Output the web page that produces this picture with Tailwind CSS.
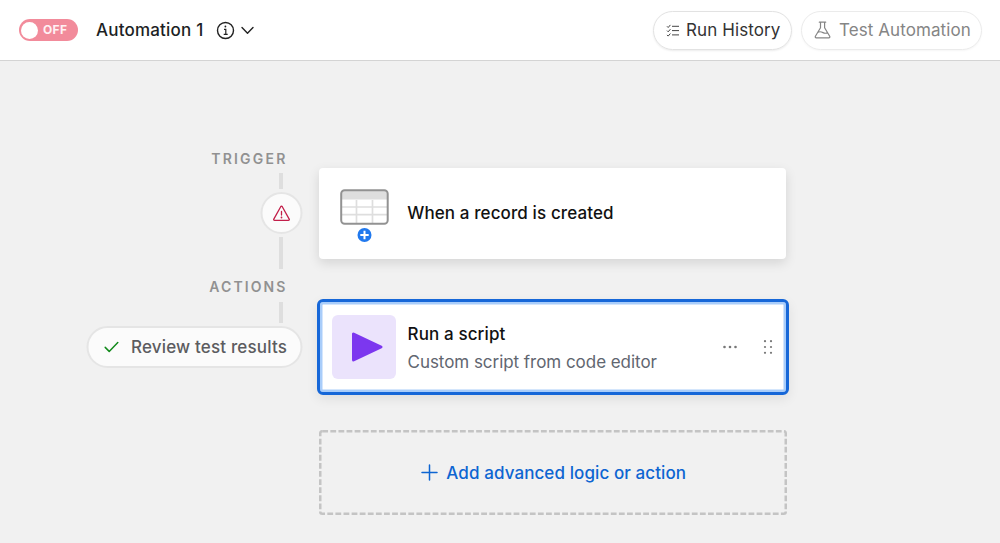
<!DOCTYPE html>
<html lang="en">
<head>
<meta charset="utf-8">
<title>Automation 1</title>
<script src="https://cdn.jsdelivr.net/npm/@tailwindcss/browser@4"></script>
</head>
<body class="h-[543px] w-[1000px] overflow-hidden bg-[#f1f1f1] font-['Inter','Liberation_Sans',sans-serif] text-[17px]">
<header class="flex h-[61px] items-center border-b border-[#d4d4d4] bg-white pl-[18.500px] pr-[18px]">
  <button class="flex h-[22px] w-[59px] items-center gap-[5px] rounded-full bg-[#f28b9b] pl-[2.500px]">
    <span class="size-[17px] rounded-full bg-white"></span>
    <span class="text-[12px] font-bold tracking-[0.3px] text-[#fff2f4]">OFF</span>
  </button>
  <h1 class="ml-[18.500px] w-[109px] whitespace-nowrap pt-[2px] font-medium tracking-[0.2px] text-[#1d1f25]">Automation 1</h1>
  <svg class="ml-[11px] size-[19px]" viewBox="0 0 19 19" fill="none" stroke="#222" stroke-width="1.4"><circle cx="9.5" cy="9.5" r="8"/><path d="M8 8.3h1.8v4.9M7.7 13.3h4" stroke-width="1.2"/><circle cx="9.4" cy="5.5" r=".9" fill="#222" stroke="none"/></svg>
  <svg class="ml-[6px] h-[9px] w-[13px]" viewBox="0 0 13 9" fill="none" stroke="#222" stroke-width="1.4" stroke-linecap="round" stroke-linejoin="round"><path d="M1 1.5l5.5 5.7L12 1.5"/></svg>
  <button class="ml-auto flex h-[39px] w-[139px] items-center rounded-full border border-[#e2e2e2] pl-[12px] text-[#333] shadow-[0_1px_2px_rgba(0,0,0,0.08)]">
    <svg class="h-[13px] w-[14px]" viewBox="0 0 14 13" fill="none" stroke="#444" stroke-width="1"><path d="M6 2.3h7M6 6.6h7M6 10.9h7M1 2.3l1.2 1.2L4.4.9M1 6.6l1.2 1.2 2.2-2.6M1 10.9l1.2 1.2 2.2-2.6"/></svg>
    <span class="ml-[6px] whitespace-nowrap pt-[2px] tracking-[0.1px]">Run History</span>
  </button>
  <button class="ml-[9px] flex h-[39px] w-[181px] items-center rounded-full border border-[#ebebeb] pl-[12px] text-[#858585] shadow-[0_1px_2px_rgba(0,0,0,0.04)]">
    <svg class="h-[18px] w-[18px]" viewBox="0 0 18 18" fill="none" stroke="#858585" stroke-width="1.2" stroke-linejoin="round" stroke-linecap="round"><path d="M5.3 1.2h6.4M6.500 1.2v5.600L1.400 15.300c-.4.8 0 1.500.9 1.500h12.500c.9 0 1.300-.7.9-1.500L10.600 6.800V1.200M4 11.200c2-1 3.500-.4 5 .4s2.700.9 4.300.3"/></svg>
    <span class="ml-[7px] whitespace-nowrap pt-[2px] tracking-[0.08px]">Test Automation</span>
  </button>
</header>
<main class="flex gap-[14.500px]">
  <section class="flex w-[302px] flex-col items-end">
    <h2 class="mt-[90px] h-[16px] pr-[14.500px] text-[14px] leading-[16px] font-semibold tracking-[2.200px] text-[#919191]">TRIGGER</h2>
    <div class="mt-[6px] mr-[19px] h-[16px] w-[4px] bg-[#dedede]"></div>
    <button class="mt-[3px] flex size-[42px] translate-x-[0.500px] items-center justify-center rounded-full border-2 border-[#e5e5e5] bg-[#fbfbfb]">
      <svg class="h-[17px] w-[18px]" viewBox="0 0 18 17" fill="none" stroke="#c21f4a" stroke-width="1.3" stroke-linejoin="round" stroke-linecap="round"><path d="M8.200 1.700L1.300 14.100c-.4.700 0 1.300.8 1.300h13.800c.8 0 1.200-.6.800-1.300L9.800 1.700c-.4-.6-1.200-.6-1.600 0zM9 6.500v3.500"/><circle cx="9" cy="12.500" r=".9" fill="#c21f4a" stroke="none"/></svg>
    </button>
    <div class="mt-[3px] mr-[19px] h-[32px] w-[4px] bg-[#dedede]"></div>
    <h2 class="mt-[10px] h-[16px] pr-[14.500px] text-[14px] leading-[16px] font-semibold tracking-[2.100px] text-[#919191]">ACTIONS</h2>
    <div class="mt-[7px] mr-[19px] h-[21px] w-[4px] bg-[#dedede]"></div>
    <button class="mt-[3px] flex h-[42px] w-[216px] translate-x-[0.500px] items-center rounded-full border-2 border-[#e5e5e5] bg-[#fbfbfb] pl-[15px] font-medium text-[#5c5c60]">
      <svg class="h-[12px] w-[16px]" viewBox="0 0 16 12" fill="none" stroke="#138a1c" stroke-width="1.500" stroke-linecap="round" stroke-linejoin="round"><path d="M1.700 6.400l4 4L14.300 1.500"/></svg>
      <span class="ml-[11.500px] whitespace-nowrap pt-[2px] tracking-[0.170px]">Review test results</span>
    </button>
  </section>
  <section class="flex w-[472px] flex-col items-center pt-[107px]">
    <article class="flex h-[91px] w-[467.500px] items-center rounded-[4px] bg-white pl-[21px] shadow-[0_4px_12px_rgba(0,0,0,0.12)]">
      <svg class="mt-[6px] h-[55px] w-[50px]" viewBox="0 0 50 55" fill="none"><rect x="1.200" y="1.200" width="46.500" height="33.500" rx="3" fill="#fff"/><path d="M2 10.500V4q0-2 2-2h41q2 0 2 2v6.500z" fill="#dedede"/><path d="M2 18h45M2 25.700h45M16.500 11v23M32.500 11v23" stroke="#dedede" stroke-width="1.700"/><rect x="1.200" y="1.200" width="46.500" height="33.500" rx="3.500" stroke="#929292" stroke-width="2"/><circle cx="24.500" cy="46" r="7" fill="#2179ee"/><path d="M20.300 46h8.400M24.500 41.800v8.400" stroke="#fff" stroke-width="2"/></svg>
      <h3 class="ml-[17.500px] whitespace-nowrap pt-px font-medium tracking-[0.110px] text-[#111]">When a record is created</h3>
    </article>
    <article class="mt-[40px] flex h-[96px] w-[472px] items-center rounded-[6px] border-3 border-[#1667d8] bg-white pl-[12.500px] shadow-[inset_0_0_0_2.500px_#a9cdfa,0_4px_12px_rgba(0,0,0,0.08)]">
      <div class="flex size-[64px] items-center justify-center rounded-[6px] bg-[#ebe3fc]">
        <svg class="ml-[5px] size-[32px]" viewBox="0 0 32 32"><path d="M2.500 3v26L30 16z" fill="#7c37ef" stroke="#7c37ef" stroke-width="3" stroke-linejoin="round"/></svg>
      </div>
      <div class="ml-[11.500px] mt-[2px] whitespace-nowrap leading-[27px]">
        <h3 class="font-medium tracking-[0.120px] text-[#111]">Run a script</h3>
        <p class="pt-px tracking-[-0.040px] text-[#616670]">Custom script from code editor</p>
      </div>
      <svg class="ml-auto h-[4px] w-[16px]" viewBox="0 0 16 4" fill="#777"><circle cx="2.500" cy="2" r="1.300"/><circle cx="8" cy="2" r="1.300"/><circle cx="13.500" cy="2" r="1.300"/></svg>
      <svg class="ml-[25px] mr-[13px] h-[16px] w-[10px]" viewBox="0 0 10 16" fill="#777"><circle cx="2" cy="2.200" r="1.100"/><circle cx="8" cy="2.200" r="1.100"/><circle cx="2" cy="8" r="1.100"/><circle cx="8" cy="8" r="1.100"/><circle cx="2" cy="13.800" r="1.100"/><circle cx="8" cy="13.800" r="1.100"/></svg>
    </article>
    <button class="relative mt-[35px] flex h-[85px] w-[468px] items-center justify-center pl-[2.500px] font-medium text-[#0d65d2]">
      <svg class="absolute inset-0 h-[85px] w-[468px]" viewBox="0 0 468 85" fill="none" stroke="#c4c4c4" stroke-width="2.500" stroke-dasharray="5.800 2.300"><rect x="1.250" y="1.250" width="465.500" height="82.500" rx="2"/></svg>
      <svg class="size-[17px]" viewBox="0 0 17 17" stroke="#0d65d2" stroke-width="1.500" stroke-linecap="round"><path d="M1 8.500h15M8.500 1v15"/></svg>
      <span class="ml-[8px] whitespace-nowrap pt-[2px] tracking-[0.090px]">Add advanced logic or action</span>
    </button>
  </section>
</main>
</body>
</html>
